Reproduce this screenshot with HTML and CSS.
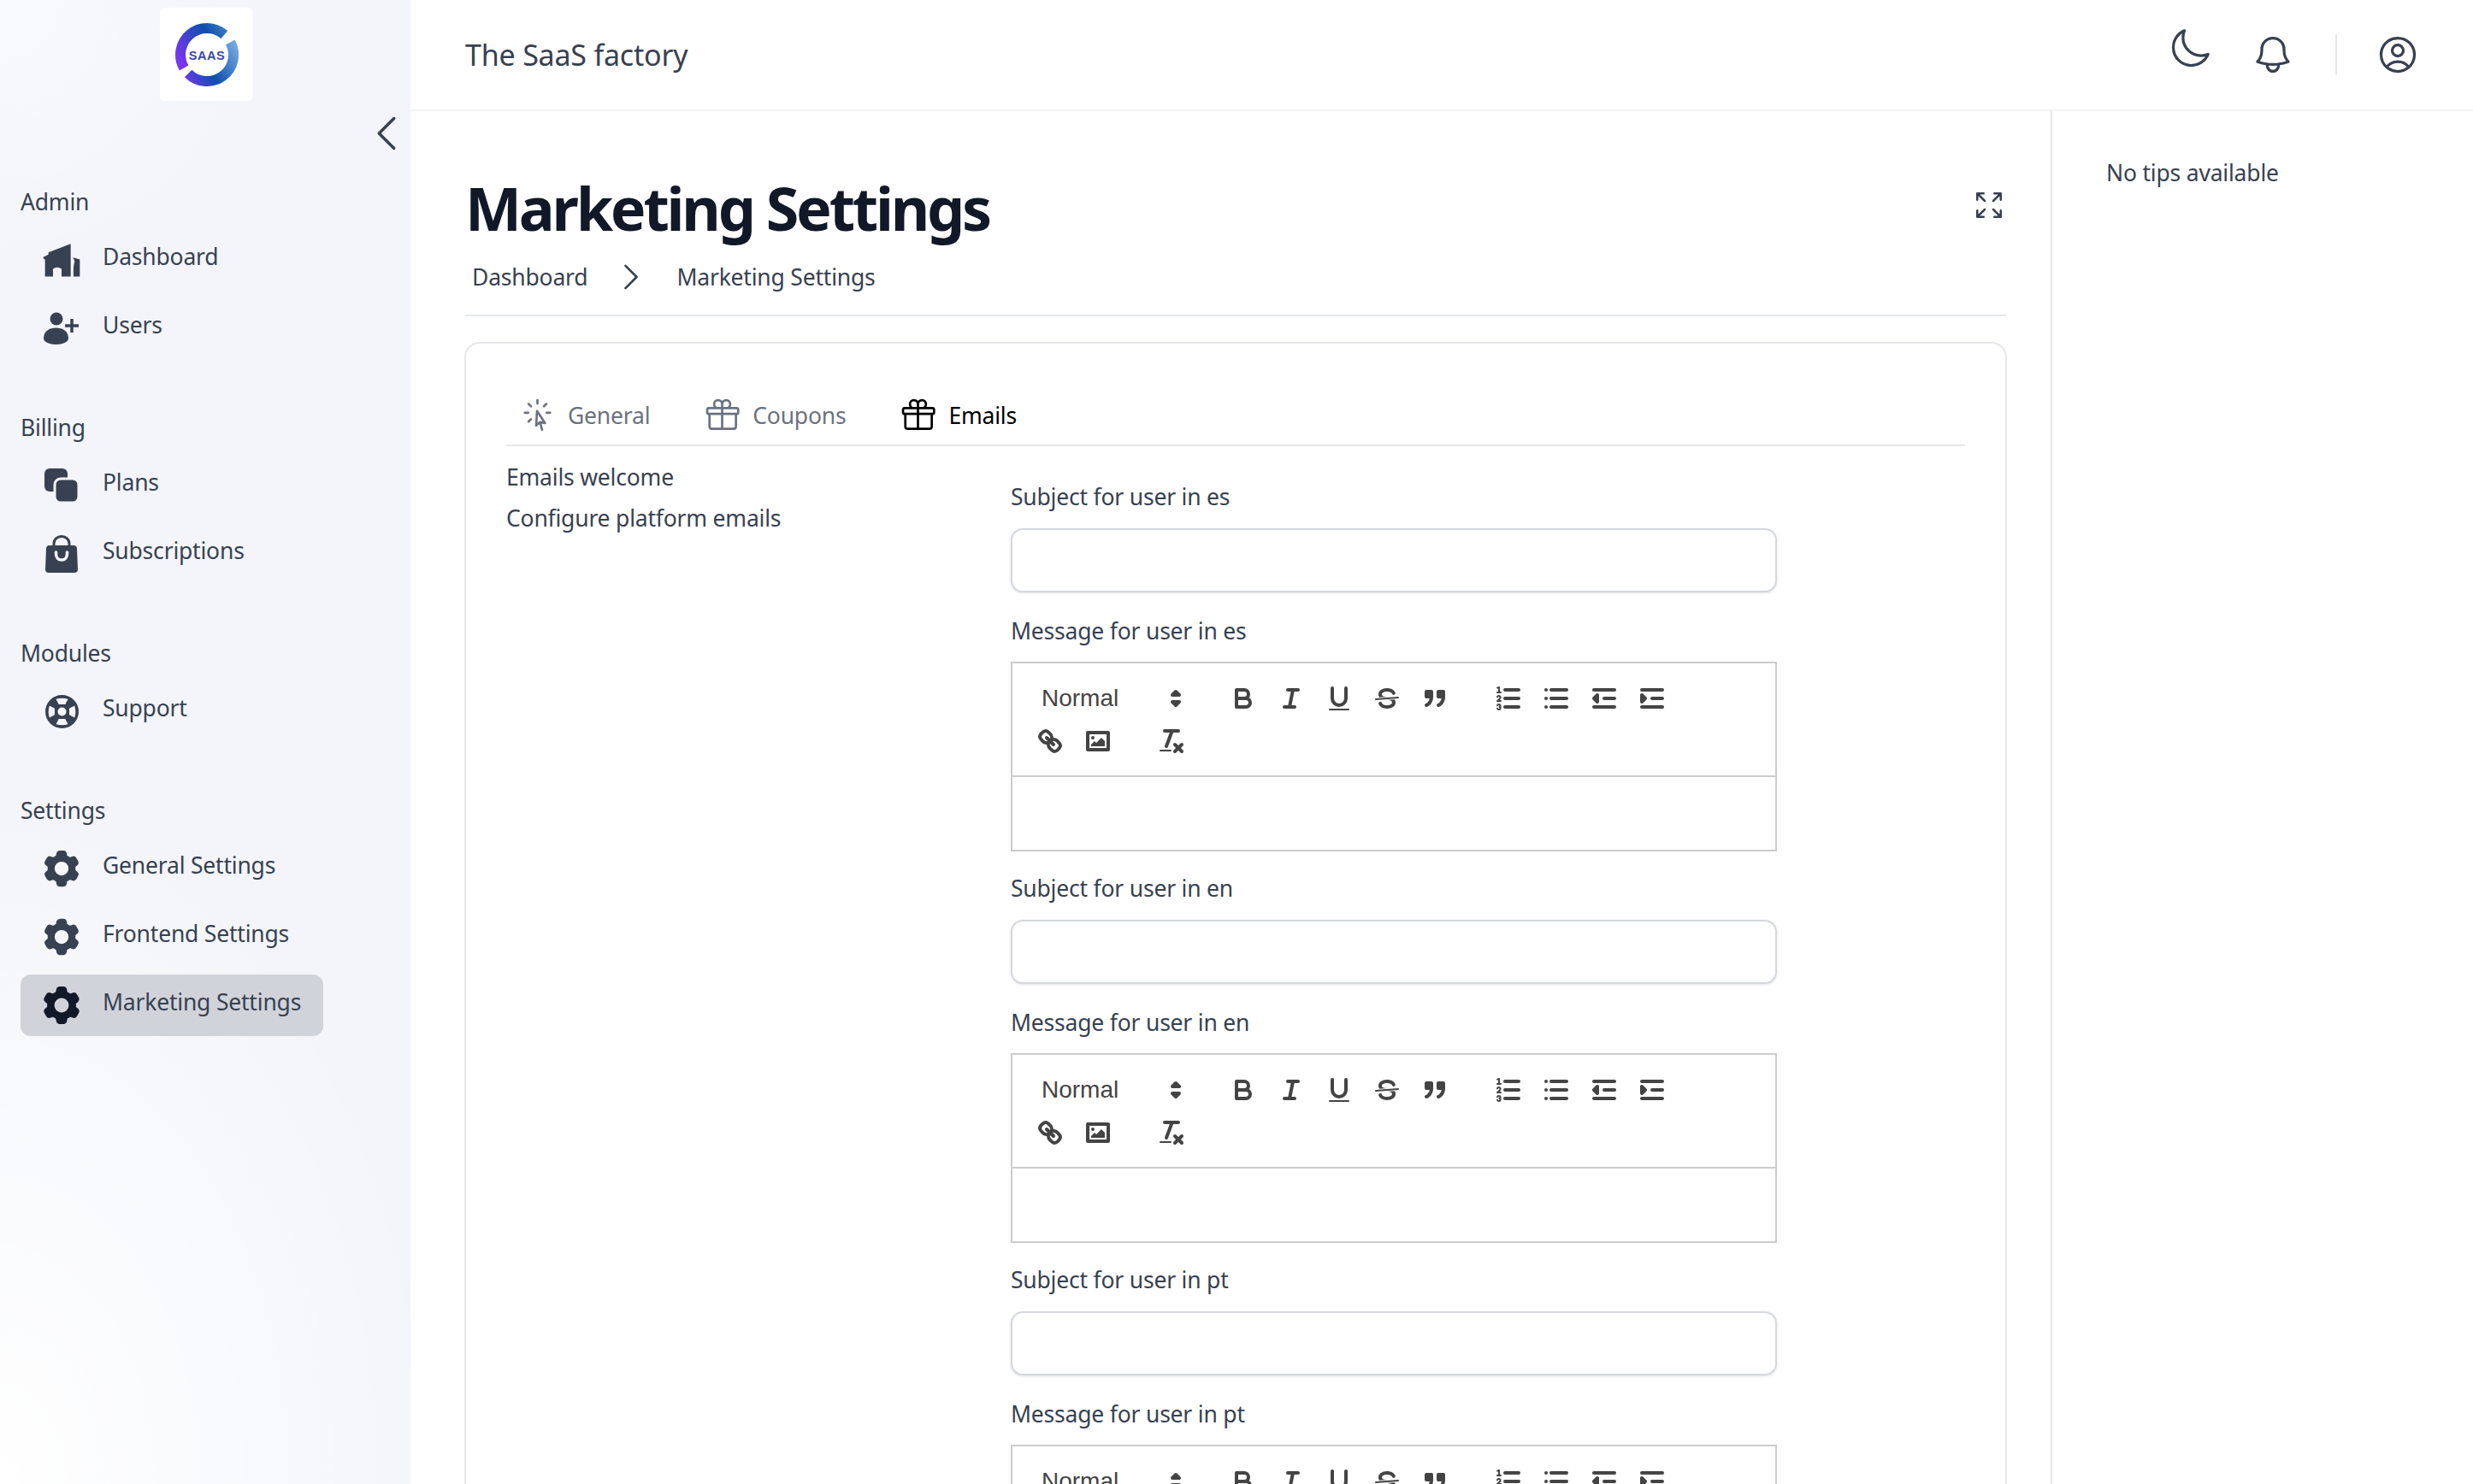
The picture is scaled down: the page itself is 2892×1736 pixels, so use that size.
FILE: index.html
```html
<!DOCTYPE html>
<html lang="en">
<head>
    <meta charset="UTF-8">
    <meta name="viewport" content="width=device-width, initial-scale=1.0">
    <title>Marketing Settings</title>
    <link rel="stylesheet" href="styles.css">
</head>
<body>
    <svg class="icon-defs" xmlns="http://www.w3.org/2000/svg">
        <symbol id="gear" viewBox="0 0 24 24"><path fill-rule="evenodd" clip-rule="evenodd" d="M11.078 2.25c-.917 0-1.699.663-1.85 1.567L9.05 4.889c-.02.12-.115.26-.297.348a7.493 7.493 0 00-.986.57c-.166.115-.334.126-.45.083L6.3 5.508a1.875 1.875 0 00-2.282.819l-.922 1.597a1.875 1.875 0 00.432 2.385l.84.692c.095.078.17.229.154.43a7.598 7.598 0 000 1.139c.015.2-.059.352-.153.43l-.841.692a1.875 1.875 0 00-.432 2.385l.922 1.597a1.875 1.875 0 002.282.818l1.019-.382c.115-.043.283-.031.45.082.312.214.641.405.985.57.182.088.277.228.297.35l.178 1.071c.151.904.933 1.567 1.85 1.567h1.844c.916 0 1.699-.663 1.85-1.567l.178-1.072c.02-.12.114-.26.297-.349.344-.165.673-.356.985-.57.167-.114.335-.125.45-.082l1.02.382a1.875 1.875 0 002.28-.819l.923-1.597a1.875 1.875 0 00-.432-2.385l-.84-.692c-.095-.078-.17-.229-.154-.43a7.614 7.614 0 000-1.139c-.016-.2.059-.352.153-.43l.84-.692c.708-.582.891-1.59.433-2.385l-.922-1.597a1.875 1.875 0 00-2.282-.818l-1.02.382c-.114.043-.282.031-.449-.083a7.49 7.49 0 00-.985-.57c-.183-.087-.277-.227-.297-.348l-.179-1.072a1.875 1.875 0 00-1.85-1.567h-1.843zM12 15.75a3.75 3.75 0 100-7.5 3.75 3.75 0 000 7.5z"/></symbol>
        <symbol id="gift" viewBox="0 0 24 24"><path d="M21 11.25v8.25a1.5 1.5 0 01-1.5 1.5H5.25a1.5 1.5 0 01-1.5-1.5v-8.25M12 4.875A2.625 2.625 0 109.375 7.5H12m0-2.625V7.5m0-2.625A2.625 2.625 0 1114.625 7.5H12m0 0V21m-8.625-9.75h18c.621 0 1.125-.504 1.125-1.125v-1.5c0-.621-.504-1.125-1.125-1.125h-18c-.621 0-1.125.504-1.125 1.125v1.5c0 .621.504 1.125 1.125 1.125z"/></symbol>

        <symbol id="q-caret" viewBox="0 0 18 18"><polygon class="q-line q-solid" points="7 11 9 13 11 11 7 11"/><polygon class="q-line q-solid" points="7 7 9 5 11 7 7 7"/></symbol>
        <symbol id="q-bold" viewBox="0 0 18 18"><path class="q-line" d="M5,4H9.5A2.5,2.5,0,0,1,12,6.5v0A2.5,2.5,0,0,1,9.5,9H5A0,0,0,0,1,5,9V4A0,0,0,0,1,5,4Z"/><path class="q-line" d="M5,9h5.5A2.5,2.5,0,0,1,13,11.5v0A2.5,2.5,0,0,1,10.5,14H5a0,0,0,0,1,0,0V9A0,0,0,0,1,5,9Z"/></symbol>
        <symbol id="q-italic" viewBox="0 0 18 18"><line class="q-line" x1="7" x2="13" y1="4" y2="4"/><line class="q-line" x1="5" x2="11" y1="14" y2="14"/><line class="q-line" x1="8" x2="10" y1="14" y2="4"/></symbol>
        <symbol id="q-underline" viewBox="0 0 18 18"><path class="q-line" d="M5,3V9a4.012,4.012,0,0,0,4,4H9a4.012,4.012,0,0,0,4-4V3"/><rect class="q-fill" height="1" rx="0.5" ry="0.5" width="12" x="3" y="15"/></symbol>
        <symbol id="q-strike" viewBox="0 0 18 18"><line class="q-line q-thin" x1="15.5" x2="2.5" y1="8.5" y2="9.5"/><path class="q-fill" d="M9.007,8C6.542,7.791,6,7.519,6,6.5,6,5.792,7.283,5,9,5c1.571,0,2.765.679,2.969,1.309a1,1,0,0,0,1.9-.617C13.356,4.106,11.354,3,9,3,6.2,3,4,4.538,4,6.5a3.2,3.2,0,0,0,.5,1.843Z"/><path class="q-fill" d="M8.984,10C11.457,10.208,12,10.479,12,11.5c0,.708-1.283,1.5-3,1.5-1.571,0-2.765-.679-2.969-1.309a1,1,0,1,0-1.9.617C4.644,13.894,6.646,15,9,15c2.8,0,5-1.538,5-3.5a3.2,3.2,0,0,0-.5-1.843Z"/></symbol>
        <symbol id="q-quote" viewBox="0 0 18 18"><rect class="q-line q-solid" height="3" width="3" x="4" y="5"/><rect class="q-line q-solid" height="3" width="3" x="11" y="5"/><path class="q-line q-solid" d="M7,8c0,4.031-3,5-3,5"/><path class="q-line q-solid" d="M14,8c0,4.031-3,5-3,5"/></symbol>
        <symbol id="q-ordered" viewBox="0 0 18 18"><line class="q-line" x1="7" x2="15" y1="4" y2="4"/><line class="q-line" x1="7" x2="15" y1="9" y2="9"/><line class="q-line" x1="7" x2="15" y1="14" y2="14"/><line class="q-line q-thin" x1="2.5" x2="4.5" y1="5.5" y2="5.5"/><path class="q-fill" d="M3.5,6A0.5,0.5,0,0,1,3,5.5V3.085l-0.276.138A0.5,0.5,0,0,1,2.053,3c-0.124-.247-0.023-0.324.224-0.447l1-.5A0.5,0.5,0,0,1,4,2.5v3A0.5,0.5,0,0,1,3.5,6Z"/><path class="q-line q-thin" d="M4.5,10.5h-2c0-.234,1.85-1.076,1.85-2.234A0.959,0.959,0,0,0,2.5,8.156"/><path class="q-line q-thin" d="M2.5,14.846a0.959,0.959,0,0,0,1.85-.109A0.7,0.7,0,0,0,3.75,14a0.688,0.688,0,0,0,.6-0.736,0.959,0.959,0,0,0-1.85-.109"/></symbol>
        <symbol id="q-bullet" viewBox="0 0 18 18"><line class="q-line" x1="6" x2="15" y1="4" y2="4"/><line class="q-line" x1="6" x2="15" y1="9" y2="9"/><line class="q-line" x1="6" x2="15" y1="14" y2="14"/><line class="q-line" x1="3" x2="3" y1="4" y2="4"/><line class="q-line" x1="3" x2="3" y1="9" y2="9"/><line class="q-line" x1="3" x2="3" y1="14" y2="14"/></symbol>
        <symbol id="q-outdent" viewBox="0 0 18 18"><line class="q-line" x1="3" x2="15" y1="14" y2="14"/><line class="q-line" x1="3" x2="15" y1="4" y2="4"/><line class="q-line" x1="9" x2="15" y1="9" y2="9"/><polyline class="q-line q-solid" points="5 7 5 11 3 9 5 7"/></symbol>
        <symbol id="q-indent" viewBox="0 0 18 18"><line class="q-line" x1="3" x2="15" y1="14" y2="14"/><line class="q-line" x1="3" x2="15" y1="4" y2="4"/><line class="q-line" x1="9" x2="15" y1="9" y2="9"/><polyline class="q-line q-solid" points="3 7 3 11 5 9 3 7"/></symbol>
        <symbol id="q-link" viewBox="0 0 18 18"><line class="q-line" x1="7" x2="11" y1="7" y2="11"/><path class="q-line" d="M8.9,4.577a3.476,3.476,0,0,1,.36,4.679A3.476,3.476,0,0,1,4.577,8.9C3.185,7.5,2.035,6.4,4.217,4.217S7.5,3.185,8.9,4.577Z"/><path class="q-line" d="M13.423,9.1a3.476,3.476,0,0,0-4.679-.36,3.476,3.476,0,0,0,.36,4.679c1.392,1.392,2.5,2.542,4.679.36S14.815,10.5,13.423,9.1Z"/></symbol>
        <symbol id="q-image" viewBox="0 0 18 18"><rect class="q-line" height="10" width="12" x="3" y="4"/><circle class="q-fill" cx="6" cy="7" r="1"/><polyline class="q-fill" points="5 12 5 11 7 9 8 10 11 7 13 9 13 12 5 12"/></symbol>
        <symbol id="q-clean" viewBox="0 0 18 18"><line class="q-line" x1="5" x2="13" y1="3" y2="3"/><line class="q-line" x1="6" x2="9.35" y1="12" y2="3"/><line class="q-line" x1="11" x2="15" y1="11" y2="15"/><line class="q-line" x1="15" x2="11" y1="11" y2="15"/><rect class="q-fill" height="1" rx="0.5" ry="0.5" width="7" x="2" y="14"/></symbol>
    </svg>

    <div class="app">
        <aside class="sidebar">
            <div class="logo">
                <svg width="80" height="80" viewBox="0 0 80 80">
                    <defs>
                        <linearGradient id="arcA" gradientUnits="userSpaceOnUse" x1="10" y1="50" x2="68" y2="14">
                            <stop offset="0" stop-color="#7a35f0"/>
                            <stop offset="0.65" stop-color="#0d4fae"/>
                            <stop offset="1" stop-color="#3f80c2"/>
                        </linearGradient>
                        <linearGradient id="arcB" gradientUnits="userSpaceOnUse" x1="72" y1="28" x2="14" y2="66">
                            <stop offset="0" stop-color="#74a6de"/>
                            <stop offset="0.6" stop-color="#0d4fae"/>
                            <stop offset="1" stop-color="#6a3ae8"/>
                        </linearGradient>
                    </defs>
                    <path d="M13.15 55.5A31 31 0 0 1 60.3 16.6" fill="none" stroke="url(#arcA)" stroke-width="12"/>
                    <path d="M67.4 25.4A31 31 0 0 1 18.1 61.9" fill="none" stroke="url(#arcB)" stroke-width="12"/>
                    <text class="logo-text" x="40" y="45.5" text-anchor="middle">SAAS</text>
                </svg>
            </div>
            <div class="sidebar-toggle">
                <svg class="outline" width="56" height="56" viewBox="0 0 24 24"><path d="M15.75 19.5L8.25 12l7.5-7.5"/></svg>
            </div>
            <nav class="nav">
                <div class="nav-group">
                    <div class="nav-heading">Admin</div>
                    <a class="nav-item">
                        <span class="nav-icon"><svg width="44" height="39" viewBox="0 0 132 116"><path d="M2 47L20 38V30L98 0V115H66V88Q50 78 36 88V115H8V55L2 52Z"/><path d="M106 48L130 55V115H108Q106 80 112 62Z"/></svg></span>
                        <span class="nav-label">Dashboard</span>
                    </a>
                    <a class="nav-item">
                        <span class="nav-icon"><svg width="42" height="38" viewBox="0 0 42 38"><circle cx="15" cy="8" r="7.5"/><path d="M0 31C0 22 7 18.5 14.5 18.5S29 22 29 31C29 35 22 38 14.5 38S0 35 0 31Z"/><path class="icon-plus" d="M33 8v16M25 16h16"/></svg></span>
                        <span class="nav-label">Users</span>
                    </a>
                </div>
                <div class="nav-group">
                    <div class="nav-heading">Billing</div>
                    <a class="nav-item">
                        <span class="nav-icon"><svg width="40" height="40" viewBox="0 0 40 40"><rect x="0" y="0" width="27" height="27" rx="6"/><rect class="icon-gap" x="12" y="12" width="28" height="28" rx="7"/></svg></span>
                        <span class="nav-label">Plans</span>
                    </a>
                    <a class="nav-item">
                        <span class="nav-icon"><svg width="38" height="44" viewBox="0 0 38 44"><path class="icon-handle" d="M10 14V10C10 5 14 1.5 19 1.5S28 5 28 10V14"/><path d="M5 12H33Q37 12 37 16L38 40Q38 44 34 44H4Q0 44 0 40L1 16Q1 12 5 12Z"/><path class="icon-cut" d="M12.5 20V22C12.5 26 15 29 19 29S25.5 26 25.5 22V20"/></svg></span>
                        <span class="nav-label">Subscriptions</span>
                    </a>
                </div>
                <div class="nav-group">
                    <div class="nav-heading">Modules</div>
                    <a class="nav-item">
                        <span class="nav-icon"><svg width="39" height="39" viewBox="0 0 39 39">
                            <circle cx="19.5" cy="19.5" r="19.5"/>
                            <path class="icon-light" d="M15.7 11H23.3L26.5 4.8Q19.5 2.5 12.5 4.8Z"/>
                            <path class="icon-light" d="M15.7 11H23.3L26.5 4.8Q19.5 2.5 12.5 4.8Z" transform="rotate(90 19.5 19.5)"/>
                            <path class="icon-light" d="M15.7 11H23.3L26.5 4.8Q19.5 2.5 12.5 4.8Z" transform="rotate(180 19.5 19.5)"/>
                            <path class="icon-light" d="M15.7 11H23.3L26.5 4.8Q19.5 2.5 12.5 4.8Z" transform="rotate(270 19.5 19.5)"/>
                            <circle class="icon-light" cx="19.5" cy="19.5" r="5"/>
                        </svg></span>
                        <span class="nav-label">Support</span>
                    </a>
                </div>
                <div class="nav-group">
                    <div class="nav-heading">Settings</div>
                    <a class="nav-item">
                        <span class="nav-icon"><svg width="52" height="52"><use href="#gear"/></svg></span>
                        <span class="nav-label">General Settings</span>
                    </a>
                    <a class="nav-item">
                        <span class="nav-icon"><svg width="52" height="52"><use href="#gear"/></svg></span>
                        <span class="nav-label">Frontend Settings</span>
                    </a>
                    <a class="nav-item active">
                        <span class="nav-icon"><svg width="54" height="54"><use href="#gear"/></svg></span>
                        <span class="nav-label">Marketing Settings</span>
                    </a>
                </div>
            </nav>
        </aside>

        <div class="main">
            <header class="topbar">
                <div class="app-name">The SaaS factory</div>
                <div class="topbar-actions">
                    <svg class="outline moon" width="52" height="52" viewBox="0 0 24 24"><path d="M21.752 15.002A9.718 9.718 0 0118 15.75c-5.385 0-9.75-4.365-9.75-9.75 0-1.33.266-2.597.748-3.752A9.753 9.753 0 003 11.25C3 16.635 7.365 21 12.75 21a9.753 9.753 0 009.002-5.998z"/></svg>
                    <svg class="outline bell" width="52" height="52" viewBox="0 0 24 24"><path d="M14.857 17.082a23.848 23.848 0 005.454-1.31A8.967 8.967 0 0118 9.75v-.7V9A6 6 0 006 9v.75a8.967 8.967 0 01-2.312 6.022c1.733.64 3.56 1.085 5.455 1.31m5.714 0a24.255 24.255 0 01-5.714 0m5.714 0a3 3 0 11-5.714 0"/></svg>
                    <span class="topbar-divider"></span>
                    <svg class="outline" width="52" height="52" viewBox="0 0 24 24"><path d="M17.982 18.725A7.488 7.488 0 0012 15.75a7.488 7.488 0 00-5.982 2.975m11.964 0a9 9 0 10-11.963 0m11.963 0A8.966 8.966 0 0112 21a8.966 8.966 0 01-5.982-2.275M15 9.75a3 3 0 11-6 0 3 3 0 016 0z"/></svg>
                </div>
            </header>

            <div class="page">
                <main class="content">
                    <div class="title-row">
                        <h1>Marketing Settings</h1>
                        <svg class="outline expand" width="40" height="40" viewBox="0 0 24 24"><path d="M3.75 3.75v4.5m0-4.5h4.5m-4.5 0L9 9M3.75 20.25v-4.5m0 4.5h4.5m-4.5 0L9 15M20.25 3.75h-4.5m4.5 0v4.5m0-4.5L15 9m5.25 11.25h-4.5m4.5 0v-4.5m0 4.5L15 15"/></svg>
                    </div>
                    <div class="breadcrumb">
                        <span>Dashboard</span>
                        <svg class="outline" width="42" height="42" viewBox="0 0 24 24"><path d="M8.25 4.5l7.5 7.5-7.5 7.5"/></svg>
                        <span>Marketing Settings</span>
                    </div>

                    <section class="card">
                        <div class="tabs">
                            <a class="tab">
                                <svg class="outline" width="43" height="43" viewBox="0 0 24 24"><path d="M15.042 21.672L13.684 16.6m0 0l-2.51 2.225.569-9.47 5.227 7.917-3.286-.672zM12 2.25V4.5m5.834.166l-1.591 1.591M20.25 10.5H18M7.757 14.743l-1.59 1.59M6 10.5H3.75m4.007-4.243l-1.59-1.59"/></svg>
                                General
                            </a>
                            <a class="tab">
                                <svg class="outline" width="43" height="43"><use href="#gift"/></svg>
                                Coupons
                            </a>
                            <a class="tab active">
                                <svg class="outline" width="43" height="43"><use href="#gift"/></svg>
                                Emails
                            </a>
                        </div>

                        <div class="form-layout">
                            <div class="form-intro">
                                <p>Emails welcome</p>
                                <p>Configure platform emails</p>
                            </div>
                            <form class="form-fields">
                                <label class="field-label">Subject for user in es</label>
                                <input class="field-input" type="text">
                                <label class="field-label">Message for user in es</label>
                                <div class="editor">
                                    <div class="toolbar">
                                        <div class="tool-group">
                                            <span class="picker">Normal<svg width="36" height="36"><use href="#q-caret"/></svg></span>
                                        </div>
                                        <div class="tool-group">
                                            <span class="tool"><svg><use href="#q-bold"/></svg></span>
                                            <span class="tool"><svg><use href="#q-italic"/></svg></span>
                                            <span class="tool"><svg><use href="#q-underline"/></svg></span>
                                            <span class="tool"><svg><use href="#q-strike"/></svg></span>
                                            <span class="tool"><svg><use href="#q-quote"/></svg></span>
                                        </div>
                                        <div class="tool-group">
                                            <span class="tool"><svg><use href="#q-ordered"/></svg></span>
                                            <span class="tool"><svg><use href="#q-bullet"/></svg></span>
                                            <span class="tool"><svg><use href="#q-outdent"/></svg></span>
                                            <span class="tool"><svg><use href="#q-indent"/></svg></span>
                                        </div>
                                        <div class="tool-group">
                                            <span class="tool"><svg><use href="#q-link"/></svg></span>
                                            <span class="tool"><svg><use href="#q-image"/></svg></span>
                                        </div>
                                        <div class="tool-group">
                                            <span class="tool"><svg><use href="#q-clean"/></svg></span>
                                        </div>
                                    </div>
                                    <div class="editor-body"></div>
                                </div>

                                <label class="field-label">Subject for user in en</label>
                                <input class="field-input" type="text">
                                <label class="field-label">Message for user in en</label>
                                <div class="editor">
                                    <div class="toolbar">
                                        <div class="tool-group">
                                            <span class="picker">Normal<svg width="36" height="36"><use href="#q-caret"/></svg></span>
                                        </div>
                                        <div class="tool-group">
                                            <span class="tool"><svg><use href="#q-bold"/></svg></span>
                                            <span class="tool"><svg><use href="#q-italic"/></svg></span>
                                            <span class="tool"><svg><use href="#q-underline"/></svg></span>
                                            <span class="tool"><svg><use href="#q-strike"/></svg></span>
                                            <span class="tool"><svg><use href="#q-quote"/></svg></span>
                                        </div>
                                        <div class="tool-group">
                                            <span class="tool"><svg><use href="#q-ordered"/></svg></span>
                                            <span class="tool"><svg><use href="#q-bullet"/></svg></span>
                                            <span class="tool"><svg><use href="#q-outdent"/></svg></span>
                                            <span class="tool"><svg><use href="#q-indent"/></svg></span>
                                        </div>
                                        <div class="tool-group">
                                            <span class="tool"><svg><use href="#q-link"/></svg></span>
                                            <span class="tool"><svg><use href="#q-image"/></svg></span>
                                        </div>
                                        <div class="tool-group">
                                            <span class="tool"><svg><use href="#q-clean"/></svg></span>
                                        </div>
                                    </div>
                                    <div class="editor-body"></div>
                                </div>

                                <label class="field-label">Subject for user in pt</label>
                                <input class="field-input" type="text">
                                <label class="field-label">Message for user in pt</label>
                                <div class="editor">
                                    <div class="toolbar">
                                        <div class="tool-group">
                                            <span class="picker">Normal<svg width="36" height="36"><use href="#q-caret"/></svg></span>
                                        </div>
                                        <div class="tool-group">
                                            <span class="tool"><svg><use href="#q-bold"/></svg></span>
                                            <span class="tool"><svg><use href="#q-italic"/></svg></span>
                                            <span class="tool"><svg><use href="#q-underline"/></svg></span>
                                            <span class="tool"><svg><use href="#q-strike"/></svg></span>
                                            <span class="tool"><svg><use href="#q-quote"/></svg></span>
                                        </div>
                                        <div class="tool-group">
                                            <span class="tool"><svg><use href="#q-ordered"/></svg></span>
                                            <span class="tool"><svg><use href="#q-bullet"/></svg></span>
                                            <span class="tool"><svg><use href="#q-outdent"/></svg></span>
                                            <span class="tool"><svg><use href="#q-indent"/></svg></span>
                                        </div>
                                    </div>
                                </div>
                            </form>
                        </div>
                    </section>
                </main>

                <aside class="tips">No tips available</aside>
            </div>
        </div>
    </div>
</body>
</html>
```

FILE: styles.css
```css
html, body {
    height: 100%;
}

body {
    margin: 0;
    overflow: hidden;
    background-color: #fff;
    color: #374151;
    font-family: "Noto Sans", sans-serif;
    font-size: 26.5px;
    line-height: 42px;
    letter-spacing: -0.2px;
}

.icon-defs {
    display: none;
}

.outline {
    flex-shrink: 0;
    fill: none;
    stroke: #374151;
    stroke-width: 1.5;
    stroke-linecap: round;
    stroke-linejoin: round;
}

.app {
    display: flex;
    height: 100%;
}

/* sidebar */
.sidebar {
    display: flex;
    flex-direction: column;
    flex-shrink: 0;
    width: 480px;
    background:
        radial-gradient(ellipse 520px 800px at 0% 100%, #fff 0%, rgba(255, 255, 255, 0) 100%),
        radial-gradient(ellipse 320px 320px at 0% 0%, rgba(255, 255, 255, 0.45), rgba(255, 255, 255, 0)),
        #f3f5fa;
}

.logo {
    display: flex;
    align-items: center;
    justify-content: center;
    width: 109px;
    height: 109px;
    margin: 9px 0 0 187px;
    background-color: #fff;
    border-radius: 6px;
}

.logo-text {
    fill: #3949a8;
    font-family: "Liberation Sans", sans-serif;
    font-size: 14.5px;
    font-weight: 700;
    letter-spacing: 0.5px;
}

.sidebar-toggle {
    display: flex;
    justify-content: flex-end;
    margin-top: 10px;
    height: 56px;
}

.nav {
    margin-top: 31px;
    padding-left: 24px;
}

.nav-group {
    margin-bottom: 59px;
}

.nav-heading {
    margin-bottom: 11px;
}

.nav-item {
    display: flex;
    align-items: center;
    width: 354px;
    height: 72px;
    margin-top: 8px;
    border-radius: 12px;
}

.nav-heading + .nav-item {
    margin-top: 0;
}

.nav-item.active {
    background-color: #d1d3da;
}

.nav-icon {
    display: flex;
    align-items: center;
    justify-content: center;
    width: 54px;
    margin-left: 21px;
    margin-right: 21px;
}

.nav-icon svg {
    fill: #374151;
}

.nav-item.active .nav-icon svg {
    fill: #111827;
}

.nav-label {
    margin-bottom: 8px;
}

.nav-icon .icon-plus {
    fill: none;
    stroke: #374151;
    stroke-width: 3.5;
}

.nav-icon .icon-handle {
    fill: none;
    stroke: #374151;
    stroke-width: 3;
}

.nav-icon .icon-gap {
    fill: #374151;
    stroke: #f3f5fa;
    stroke-width: 3;
}

.nav-icon .icon-cut {
    fill: none;
    stroke: #f3f5fa;
    stroke-width: 3.5;
    stroke-linecap: round;
}

.nav-icon .icon-light {
    fill: #f3f5fa;
}

/* top bar */
.main {
    display: flex;
    flex-direction: column;
    flex: 1;
    min-width: 0;
}

.topbar {
    display: flex;
    align-items: center;
    justify-content: space-between;
    flex-shrink: 0;
    box-sizing: border-box;
    height: 130px;
    padding: 0 62px 0 64px;
    border-bottom: 2px solid #f3f4f6;
}

.app-name {
    font-size: 34px;
    line-height: 50px;
}

.topbar-actions {
    display: flex;
    align-items: center;
}

.topbar-actions svg {
    display: block;
}

.moon {
    margin: -15px 45px 0 0;
}

.bell {
    margin-right: 47px;
}

.topbar-divider {
    width: 2px;
    height: 48px;
    margin-right: 45px;
    background-color: #e5e7eb;
}

/* page */
.page {
    display: flex;
    flex: 1;
    min-height: 0;
}

.content {
    flex: 1;
    min-width: 0;
    padding: 0 51px 0 64px;
}

.title-row {
    display: flex;
    align-items: center;
    justify-content: space-between;
    height: 95px;
    margin-top: 66px;
    padding-right: 1px;
}

.title-row h1 {
    margin: 0;
    color: #111827;
    font-size: 70px;
    font-weight: 700;
    line-height: 95px;
    letter-spacing: -3.2px;
}

.expand {
    margin-bottom: 7px;
}

.breadcrumb {
    display: flex;
    align-items: center;
    height: 66px;
    margin-right: 1px;
    padding-left: 8px;
    padding-bottom: 11px;
    border-bottom: 2px solid #e5e7eb;
}

.breadcrumb svg {
    margin: 0 32px 0 30px;
}

.card {
    margin: 30px 0 0 -1px;
    padding: 49px 47px 0 47px;
    background-color: #fff;
    border: 2px solid #e5e7eb;
    border-bottom: 0;
    border-radius: 18px 18px 0 0;
}

.tabs {
    display: flex;
    gap: 63px;
    box-sizing: border-box;
    height: 71px;
    padding-left: 15px;
    border-bottom: 2px solid #e5e7eb;
}

.tab {
    display: flex;
    align-items: center;
    gap: 14px;
    height: 69px;
    color: #6b7280;
}

.tab .outline {
    stroke: #6b7280;
}

.tab.active {
    color: #000;
}

.tab.active .outline {
    stroke: #000;
}

.form-layout {
    display: flex;
}

.form-intro {
    flex-shrink: 0;
    width: 590px;
    padding-top: 15px;
}

.form-intro p {
    margin: 0 0 6px;
}

.form-fields {
    display: flex;
    flex-direction: column;
    width: 896px;
    padding-top: 38px;
}

.field-label {
    margin-bottom: 16px;
}

.field-input {
    box-sizing: border-box;
    width: 100%;
    height: 75px;
    margin-bottom: 24px;
    background-color: #fff;
    border: 2px solid #d5d8de;
    border-radius: 14px;
    box-shadow: 0 1px 3px rgba(0, 0, 0, 0.12);
}

/* rich text editor */
.editor {
    flex-shrink: 0;
    margin: -1px 0 22px;
    border: 2px solid #ccc;
}

.toolbar {
    display: flex;
    flex-wrap: wrap;
    gap: 2px 0;
    padding: 17px 16px 16px;
    border-bottom: 2px solid #ccc;
}

.tool-group {
    display: flex;
    margin-right: 30px;
}

.picker {
    display: flex;
    align-items: center;
    justify-content: space-between;
    width: 175px;
    height: 48px;
    padding: 0 3px 0 18px;
    color: #444;
    font-family: "Liberation Sans", sans-serif;
    font-size: 28px;
    letter-spacing: 0;
}

.tool {
    display: flex;
    align-items: center;
    justify-content: center;
    width: 56px;
    height: 48px;
}

.tool svg {
    width: 36px;
    height: 36px;
}

.q-line {
    fill: none;
    stroke: #444;
    stroke-width: 2;
    stroke-linecap: round;
    stroke-linejoin: round;
}

.q-thin {
    stroke-width: 1;
}

.q-solid {
    fill: #444;
}

.q-fill {
    fill: #444;
}

.editor-body {
    height: 85px;
}

/* tips column */
.tips {
    flex-shrink: 0;
    box-sizing: border-box;
    width: 494px;
    padding: 51px 0 0 63px;
    border-left: 2px solid #e5e7eb;
}
```
